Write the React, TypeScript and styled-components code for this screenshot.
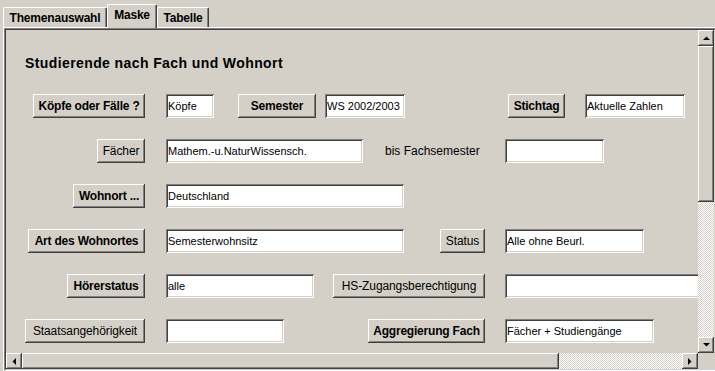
import React from 'react';
import styled, { createGlobalStyle } from 'styled-components';

const FACE = '#d4d0c8';
const LIGHT = '#ffffff';
const SHADOW = '#808080';
const DARK = '#404040';

const raised = `box-shadow: inset -1px -1px ${DARK}, inset 1px 1px ${LIGHT}, inset -2px -2px ${SHADOW}, inset 2px 2px ${FACE};`;
const sunken = `box-shadow: inset 1px 1px ${SHADOW}, inset -1px -1px ${LIGHT}, inset 2px 2px ${DARK}, inset -2px -2px ${FACE};`;

const Global = createGlobalStyle`
  html, body { margin: 0; padding: 0; background: ${FACE}; }
  body { font-family: "Liberation Sans", Arial, sans-serif; color: #000; }
  * { box-sizing: border-box; }
`;

const Window = styled.div`
  width: 715px;
  height: 371px;
  overflow: hidden;
  background: ${FACE};
  display: flex;
  flex-direction: column;
`;

const TabStrip = styled.div`
  height: 27px;
  flex: none;
  display: flex;
  align-items: flex-end;
  padding-left: 3px;
  position: relative;
  z-index: 2;
`;

const Tab = styled.div<{ $active?: boolean; $w: number }>`
  flex: none;
  width: ${(p) => p.$w}px;
  height: ${(p) => (p.$active ? 24 : 20)}px;
  margin-bottom: ${(p) => (p.$active ? -1 : 0)}px;
  padding-bottom: ${(p) => (p.$active ? 3 : 0)}px;
  background: ${FACE};
  border-top: 1px solid ${LIGHT};
  border-left: 1px solid ${LIGHT};
  border-right: 1px solid ${DARK};
  box-shadow: inset -1px 0 ${SHADOW};
  border-radius: 2px 2px 0 0;
  display: flex;
  align-items: center;
  justify-content: center;
  font-weight: bold;
  font-size: 12px;
  letter-spacing: -0.2px;
`;

const Panel = styled.div`
  flex: 1;
  margin-left: 3px;
  border-top: 1px solid ${LIGHT};
  border-left: 1px solid ${LIGHT};
  display: flex;
  min-height: 0;
`;

const Frame = styled.div`
  border-top: 1px solid ${SHADOW};
  border-left: 1px solid ${SHADOW};
  border-right: 1px solid ${LIGHT};
  border-bottom: 1px solid ${LIGHT};
  flex: none;
`;

const ScrollGrid = styled.div`
  border-top: 1px solid ${DARK};
  border-left: 1px solid ${DARK};
  border-right: 1px solid ${FACE};
  border-bottom: 1px solid ${FACE};
  display: grid;
  grid-template-columns: 692px 16px;
  grid-template-rows: 323px 16px;
`;

const Viewport = styled.div`
  overflow: hidden;
  background: ${FACE};
`;

const Content = styled.div`
  width: 900px;
  padding-top: 25px;
`;

const Title = styled.h1`
  margin: 0 0 23px 19px;
  font-size: 14px;
  line-height: 16px;
  font-weight: bold;
  letter-spacing: 0.4px;
`;

const Form = styled.div`
  display: flex;
  flex-direction: column;
  gap: 21px;
`;

const Row = styled.div`
  display: flex;
  align-items: center;
  height: 24px;
`;

const Lead = styled.div`
  flex: none;
  width: 139px;
  display: flex;
  justify-content: flex-end;
`;

const Button = styled.button<{ $w: number; $ml?: number; $bold?: boolean }>`
  flex: none;
  width: ${(p) => p.$w}px;
  height: 24px;
  margin: 0 0 0 ${(p) => p.$ml ?? 0}px;
  padding: 0;
  border: none;
  background: ${FACE};
  ${raised}
  font-family: "Liberation Sans", Arial, sans-serif;
  font-size: 12px;
  font-weight: ${(p) => (p.$bold ? 'bold' : 'normal')};
  letter-spacing: ${(p) => (p.$bold ? '-0.2px' : '-0.1px')};
  color: #000;
  white-space: nowrap;
  text-align: center;
`;

const Field = styled.div<{ $w: number; $ml?: number }>`
  flex: none;
  width: ${(p) => p.$w}px;
  height: 24px;
  margin-left: ${(p) => p.$ml ?? 21}px;
  padding: 1px 2px 0 2px;
  background: #fff;
  ${sunken}
  font-size: 11px;
  line-height: 23px;
  white-space: nowrap;
  overflow: hidden;
`;

const Label = styled.span<{ $w: number; $ml: number }>`
  flex: none;
  width: ${(p) => p.$w}px;
  margin-left: ${(p) => p.$ml}px;
  font-size: 12px;
  white-space: nowrap;
`;

const VBar = styled.div`
  display: flex;
  flex-direction: column;
`;

const HBar = styled.div`
  display: flex;
`;

const Arrow = styled.div`
  flex: none;
  width: 16px;
  height: 16px;
  background: ${FACE};
  ${raised}
  display: flex;
  align-items: center;
  justify-content: center;
`;

const Thumb = styled.div<{ $size: number; $vertical?: boolean }>`
  flex: none;
  ${(p) => (p.$vertical ? `height: ${p.$size}px;` : `width: ${p.$size}px;`)}
  background: ${FACE};
  ${raised}
`;

const Track = styled.div`
  flex: 1;
  background-color: ${FACE};
  background-image: conic-gradient(#fff 25%, transparent 0 50%, #fff 0 75%, transparent 0);
  background-size: 2px 2px;
`;

const Corner = styled.div`
  background: ${FACE};
`;

const Tri = ({ dir }: { dir: 'up' | 'down' | 'left' | 'right' }) => {
  const pts = {
    up: '0,4 7,4 3.5,0.5',
    down: '0,0 7,0 3.5,3.5',
    left: '4,0 4,7 0.5,3.5',
    right: '0,0 0,7 3.5,3.5',
  }[dir];
  const vertical = dir === 'up' || dir === 'down';
  return (
    <svg width={vertical ? 7 : 4} height={vertical ? 4 : 7} viewBox={vertical ? '0 0 7 4' : '0 0 4 7'}>
      <polygon points={pts} fill="#000" />
    </svg>
  );
};

export default function App() {
  return (
    <>
      <Global />
      <Window>
        <TabStrip>
          <Tab $w={104}>Themenauswahl</Tab>
          <Tab $w={50} $active>Maske</Tab>
          <Tab $w={52}>Tabelle</Tab>
        </TabStrip>
        <Panel>
          <Frame>
            <ScrollGrid>
              <Viewport>
                <Content>
                  <Title>Studierende nach Fach und Wohnort</Title>
                  <Form>
                    <Row>
                      <Lead><Button $w={112} $bold>Köpfe oder Fälle ?</Button></Lead>
                      <Field $w={48}>Köpfe</Field>
                      <Button $w={78} $ml={24} $bold>Semester</Button>
                      <Field $w={80} $ml={9}>WS 2002/2003</Field>
                      <Button $w={57} $ml={103} $bold>Stichtag</Button>
                      <Field $w={100} $ml={20}>Aktuelle Zahlen</Field>
                    </Row>
                    <Row>
                      <Lead><Button $w={48}>Fächer</Button></Lead>
                      <Field $w={197}>Mathem.-u.NaturWissensch.</Field>
                      <Label $w={120} $ml={22}>bis Fachsemester</Label>
                      <Field $w={99} $ml={0}></Field>
                    </Row>
                    <Row>
                      <Lead><Button $w={72} $bold>Wohnort ...</Button></Lead>
                      <Field $w={238}>Deutschland</Field>
                    </Row>
                    <Row>
                      <Lead><Button $w={117} $bold>Art des Wohnortes</Button></Lead>
                      <Field $w={238}>Semesterwohnsitz</Field>
                      <Button $w={45} $ml={36}>Status</Button>
                      <Field $w={139} $ml={20}>Alle ohne Beurl.</Field>
                    </Row>
                    <Row>
                      <Lead><Button $w={78} $bold>Hörerstatus</Button></Lead>
                      <Field $w={148}>alle</Field>
                      <Button $w={152} $ml={19}>HS-Zugangsberechtigung</Button>
                      <Field $w={200} $ml={20}></Field>
                    </Row>
                    <Row>
                      <Lead><Button $w={120}>Staatsangehörigkeit</Button></Lead>
                      <Field $w={118}></Field>
                      <Button $w={117} $ml={84} $bold>Aggregierung Fach</Button>
                      <Field $w={149} $ml={20}>Fächer + Studiengänge</Field>
                    </Row>
                  </Form>
                </Content>
              </Viewport>
              <VBar>
                <Arrow><Tri dir="up" /></Arrow>
                <Thumb $vertical $size={156} />
                <Track />
                <Arrow><Tri dir="down" /></Arrow>
              </VBar>
              <HBar>
                <Arrow><Tri dir="left" /></Arrow>
                <Thumb $size={537} />
                <Track />
                <Arrow><Tri dir="right" /></Arrow>
              </HBar>
              <Corner />
            </ScrollGrid>
          </Frame>
        </Panel>
      </Window>
    </>
  );
}
